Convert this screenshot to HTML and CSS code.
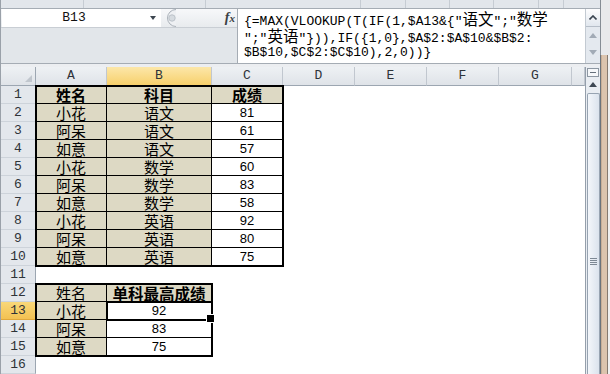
FILE: index.html
```html
<!DOCTYPE html>
<html lang="zh-CN">
<head>
  <meta charset="UTF-8" />
  <title>单科最高成绩</title>
  <link rel="stylesheet" href="styles.css">
</head>
<body>
  <div class="main">
    <div class="ribbon-edge"><span></span><span></span><span></span><span></span><span></span><span></span><span></span><span></span></div>

    <div class="formula-bar">
      <div class="name-area">
        <div class="name-row">
          <div class="namebox"><span class="ref">B13</span><span class="drop"></span></div>
          <svg class="grip" width="14" height="18" viewBox="0 0 14 18">
            <path d="M13 0.5 A8.5 8.5 0 0 0 13 17.5" fill="#eef0f3" stroke="#aab1b9"/>
            <circle cx="9" cy="9" r="3.2" fill="#d6dbe0" stroke="#bcc3ca"/>
          </svg>
          <span class="fx"><i>f</i><i class="x">x</i></span>
        </div>
      </div>
      <div class="formula">
        <div>{=MAX(VLOOKUP(T(IF(1,$A13&amp;{"<span class="cjk">语文</span>";"<span class="cjk">数学</span></div>
        <div>";"<span class="cjk">英语</span>"})),IF({1,0},$A$2:$A$10&amp;$B$2:</div>
        <div>$B$10,$C$2:$C$10),2,0))}</div>
      </div>
      <div class="fscroll">
        <div class="fbtn">
          <svg width="8" height="5" viewBox="0 0 8 5"><polyline points="0.5,4.5 4,1 7.5,4.5" fill="none" stroke="#3a4450" stroke-width="1.6"/></svg>
        </div>
        <span class="tri-up"></span>
        <span class="tri-down"></span>
      </div>
    </div>

    <div class="gap"></div>

    <div class="sheet">
      <div class="grid">
        <div class="ch corner">
          <svg width="35" height="18" viewBox="0 0 35 18"><polygon points="24,15 31,8 31,15" fill="#c0c6cd"/></svg>
        </div>
        <div class="ch">A</div>
        <div class="ch sel">B</div>
        <div class="ch">C</div>
        <div class="ch">D</div>
        <div class="ch">E</div>
        <div class="ch">F</div>
        <div class="ch">G</div>
        <div class="ch"></div>

        <div class="rh">1</div>
        <div class="rh">2</div>
        <div class="rh">3</div>
        <div class="rh">4</div>
        <div class="rh">5</div>
        <div class="rh">6</div>
        <div class="rh">7</div>
        <div class="rh">8</div>
        <div class="rh">9</div>
        <div class="rh">10</div>
        <div class="rh">11</div>
        <div class="rh">12</div>
        <div class="rh sel">13</div>
        <div class="rh">14</div>
        <div class="rh">15</div>
        <div class="rh">16</div>

        <div class="tbl tbl1">
          <div class="tan b">姓名</div><div class="tan b">科目</div><div class="tan b">成绩</div>
          <div class="tan">小花</div><div class="tan">语文</div><div class="n">81</div>
          <div class="tan">阿呆</div><div class="tan">语文</div><div class="n">61</div>
          <div class="tan">如意</div><div class="tan">语文</div><div class="n">57</div>
          <div class="tan">小花</div><div class="tan">数学</div><div class="n">60</div>
          <div class="tan">阿呆</div><div class="tan">数学</div><div class="n">83</div>
          <div class="tan">如意</div><div class="tan">数学</div><div class="n">58</div>
          <div class="tan">小花</div><div class="tan">英语</div><div class="n">92</div>
          <div class="tan">阿呆</div><div class="tan">英语</div><div class="n">80</div>
          <div class="tan">如意</div><div class="tan">英语</div><div class="n">75</div>
        </div>

        <div class="tbl tbl2">
          <div class="tan">姓名</div><div class="tan b wide">单科最高成绩</div>
          <div class="tan">小花</div><div class="n act">92</div>
          <div class="tan">阿呆</div><div class="n">83</div>
          <div class="tan">如意</div><div class="n">75</div>
        </div>
      </div>

      <div class="vscroll">
        <div class="split"></div>
        <span class="up"></span>
        <div class="thumb"><span class="lines"></span></div>
      </div>
    </div>
  </div>

  <div class="frame">
    <div class="frame-top"></div>
    <div class="frame-side"></div>
  </div>
</body>
</html>
```

FILE: styles.css
```css
* { box-sizing: border-box; }

body {
  margin: 0;
  width: 610px;
  height: 374px;
  overflow: hidden;
  display: flex;
  background: #fff;
  font-family: "Liberation Sans", "Noto Sans CJK SC", sans-serif;
  color: #000;
}

.main {
  width: 600px;
  border-left: 1px solid #9aa1a9;
  display: flex;
  flex-direction: column;
}

/* strip of the ribbon above the formula bar */
.ribbon-edge {
  height: 9px;
  flex: none;
  display: flex;
  background: #e2e6eb;
  border-bottom: 1px solid #a5acb4;
}

.ribbon-edge span { border-right: 1px solid #c6ccd3; }
.ribbon-edge span:nth-child(1) { width: 83px; }
.ribbon-edge span:nth-child(2) { width: 122px; }
.ribbon-edge span:nth-child(3) { width: 155px; }
.ribbon-edge span:nth-child(4) { width: 45px; }
.ribbon-edge span:nth-child(5) { width: 44px; }
.ribbon-edge span:nth-child(6) { width: 44px; }
.ribbon-edge span:nth-child(7) { width: 45px; }
.ribbon-edge span:nth-child(8) { width: 25px; }

/* formula bar */
.formula-bar {
  height: 55px;
  flex: none;
  display: flex;
  border-bottom: 1px solid #a5acb4;
}

.name-area {
  width: 236px;
  background: #e2e6ea;
}

.name-row {
  height: 19px;
  display: flex;
  align-items: center;
  background: linear-gradient(#f7f8fa, #e8ebee);
  border-bottom: 1px solid #c9ced4;
}

.namebox {
  width: 159px;
  height: 18px;
  margin-left: 1px;
  display: flex;
  align-items: center;
  background: #fff;
}

.ref {
  flex: 1;
  text-align: center;
  font: 13px/18px "Liberation Mono", monospace;
  color: #111;
}

.drop {
  width: 0;
  height: 0;
  margin: 0 5px 0 4px;
  border-left: 3.5px solid transparent;
  border-right: 3.5px solid transparent;
  border-top: 4px solid #3d4650;
}

.grip { margin-left: 2px; }

.fx {
  margin-left: auto;
  margin-right: 2px;
  font-family: "Liberation Serif", serif;
  font-weight: 700;
  font-size: 14px;
  color: #3a3f45;
}

.fx .x { font-size: 11px; }

.formula {
  flex: 1;
  background: #fff;
  border-left: 1px solid #a5acb4;
  padding: 1px 0 0 6px;
  font: 13px/17px "Liberation Mono", monospace;
}

.formula div {
  height: 17px;
  white-space: pre;
}

.cjk {
  font-family: "Noto Sans CJK SC", sans-serif;
  font-size: 15.5px;
  line-height: 17px;
}

.fscroll {
  width: 15px;
  display: flex;
  flex-direction: column;
  align-items: center;
  background: #e4e9ef;
  border-left: 1px solid #c3cad2;
}

.fbtn {
  width: 14px;
  height: 18px;
  display: flex;
  align-items: center;
  justify-content: center;
  background: linear-gradient(#fdfdfe, #e1e7ee);
  border-bottom: 1px solid #b6bec8;
}

.tri-up, .tri-down {
  width: 0;
  height: 0;
  border-left: 4px solid transparent;
  border-right: 4px solid transparent;
}

.tri-up {
  margin-top: 6px;
  border-bottom: 5px solid #a2abb6;
}

.tri-down {
  margin-top: 12px;
  border-top: 5px solid #a2abb6;
}

.gap {
  height: 3px;
  flex: none;
  background: #eceef1;
}

/* worksheet */
.sheet {
  flex: 1;
  display: flex;
}

.grid {
  width: 584px;
  display: grid;
  grid-template-columns: 35px 71px 105px 71px 72px 72px 72px 73px 13px;
  grid-template-rows: 19px repeat(16, 18px);
}

.ch {
  background: linear-gradient(#eef1f4, #dfe3e8);
  border-right: 1px solid #c1c7cf;
  border-bottom: 1px solid #9ca6b1;
  text-align: center;
  font: 13px/18px "Liberation Mono", monospace;
  color: #2e3338;
}

.ch.sel {
  background: linear-gradient(#fce7a9, #f7d06c);
  border-bottom-color: #e0a83c;
}

.corner { border-right-color: #9ca6b1; }

.rh {
  grid-column: 1;
  background: #e3e7ec;
  border-right: 1px solid #9ca6b1;
  border-bottom: 1px solid #cdd3da;
  text-align: center;
  font: 13px/17px "Liberation Mono", monospace;
  color: #2e3338;
}

.rh.sel {
  background: linear-gradient(#f9d879, #f3c152);
  border-bottom-color: #e0a83c;
}

.tbl {
  display: grid;
  grid-auto-rows: 18px;
  outline: 2px solid #000;
  outline-offset: -1px;
}

.tbl1 {
  grid-column: 2 / 5;
  grid-row: 2 / 12;
  grid-template-columns: 71px 105px 71px;
}

.tbl2 {
  grid-column: 2 / 4;
  grid-row: 13 / 17;
  grid-template-columns: 71px 105px;
}

.tbl div {
  display: flex;
  align-items: center;
  justify-content: center;
  border-right: 1px solid #000;
  border-bottom: 1px solid #000;
  font-family: "Noto Sans CJK SC", sans-serif;
  font-size: 15px;
  white-space: nowrap;
}

.tbl .tan { background: #ddd9c4; }
.tbl .b { font-weight: 700; }
.tbl .wide { font-size: 15.5px; }

.tbl .n {
  font-family: "Liberation Sans", sans-serif;
  font-size: 13px;
}

.tbl .act {
  position: relative;
  outline: 2px solid #000;
  outline-offset: -1px;
}

.tbl .act::after {
  content: "";
  position: absolute;
  right: -4px;
  bottom: -4px;
  width: 7px;
  height: 7px;
  background: #000;
  border: 1px solid #fff;
}

/* vertical scrollbar */
.vscroll {
  width: 15px;
  display: flex;
  flex-direction: column;
  align-items: center;
  background: #e9edf2;
  border-left: 1px solid #959fab;
}

.split {
  width: 12px;
  height: 9px;
  margin-top: 1px;
  display: flex;
  align-items: center;
  justify-content: center;
  background: #f6f8fa;
  border: 1px solid #8d97a2;
}

.split::before {
  content: "";
  width: 6px;
  height: 1px;
  background: #66707b;
}

.up {
  width: 0;
  height: 0;
  margin-top: 5px;
  border-left: 4px solid transparent;
  border-right: 4px solid transparent;
  border-bottom: 5px solid #3e4853;
}

.thumb {
  flex: 1;
  width: 13px;
  margin-top: 6px;
  display: flex;
  justify-content: center;
  background: linear-gradient(90deg, #f3f6fa, #dbe3ed);
  border: 1px solid #97a3b1;
  border-bottom: none;
  border-radius: 2px 2px 0 0;
}

.lines {
  width: 7px;
  height: 7px;
  margin-top: 164px;
  background: repeating-linear-gradient(#7d8894 0 1px, transparent 1px 2px);
}

/* window frame on the right */
.frame {
  width: 10px;
  display: flex;
  flex-direction: column;
}

.frame-top {
  height: 55px;
  background: #e8e9eb;
  border-left: 1px solid #858c94;
}

.frame-side {
  flex: 1;
  border-left: 1px solid #6c737b;
  background: linear-gradient(90deg, #c7ae97 0 1px, #dcc4ae 1px 6px, #85796f 6px 7px, #f0f0f0 7px);
}
```
